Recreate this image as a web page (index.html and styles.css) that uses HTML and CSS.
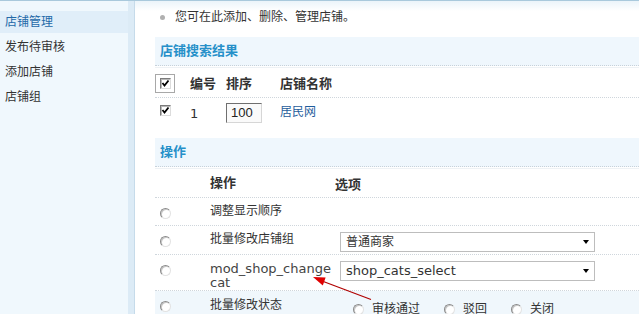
FILE: index.html
```html
<!DOCTYPE html>
<html lang="zh-CN">
<head>
<meta charset="utf-8">
<title>店铺管理</title>
<link rel="stylesheet" href="styles.css">
</head>
<body>
<div class="page">
  <aside class="side">
    <ul class="menu">
      <li class="on">店铺管理</li>
      <li>发布待审核</li>
      <li>添加店铺</li>
      <li>店铺组</li>
    </ul>
  </aside>
  <main class="main">
    <ul class="tips"><li>您可在此添加、删除、管理店铺。</li></ul>

    <div class="sec-title">店铺搜索结果</div>
    <div class="grid-row head first">
      <div class="c1"><span class="chk-wrap"><span class="chk"><svg viewBox="0 0 9 9" width="9" height="9"><path d="M1.5 4 L3.5 6.5 L7.5 1.5" fill="none" stroke="#000" stroke-width="1.8"/></svg></span></span></div>
      <div class="c2">编号</div>
      <div class="c3">排序</div>
      <div class="c4">店铺名称</div>
    </div>
    <div class="grid-row data">
      <div class="c1"><span class="chk solo"><svg viewBox="0 0 9 9" width="9" height="9"><path d="M1.5 4 L3.5 6.5 L7.5 1.5" fill="none" stroke="#000" stroke-width="1.8"/></svg></span></div>
      <div class="c2 lat">1</div>
      <div class="c3"><span class="num-input">100</span></div>
      <div class="c4"><a class="link">居民网</a></div>
    </div>

    <div class="sec-title second">操作</div>
    <div class="op-row head first">
      <div class="o1"></div>
      <div class="o2">操作</div>
      <div class="o3">选项</div>
    </div>
    <div class="op-row r1">
      <div class="o1"><span class="radio"></span></div>
      <div class="o2">调整显示顺序</div>
      <div class="o3"></div>
    </div>
    <div class="op-row r2">
      <div class="o1"><span class="radio"></span></div>
      <div class="o2">批量修改店铺组</div>
      <div class="o3"><div class="select"><span>普通商家</span><i class="caret"></i></div></div>
    </div>
    <div class="op-row r3">
      <div class="o1"><span class="radio"></span></div>
      <div class="o2 lat wrap">mod_shop_changecat</div>
      <div class="o3"><div class="select lat"><span>shop_cats_select</span><i class="caret"></i></div></div>
    </div>
    <div class="op-row r4">
      <div class="o1"><span class="radio"></span></div>
      <div class="o2">批量修改状态</div>
      <div class="o3 opts">
        <label class="opt"><span class="radio"></span>审核通过</label>
        <label class="opt"><span class="radio"></span>驳回</label>
        <label class="opt"><span class="radio"></span>关闭</label>
      </div>
    </div>
  </main>
  <svg class="arrow" width="639" height="314" viewBox="0 0 639 314">
    <line x1="371" y1="299.5" x2="322" y2="281" stroke="#b00000" stroke-width="1.2"/>
    <polygon points="313,277 325.6,277.6 322.8,285.4" fill="#e00000"/>
  </svg>
</div>
</body>
</html>
```
FILE: styles.css
```css
html, body {
  margin: 0;
  padding: 0;
  background: #fff;
}
body {
  font-family: "DejaVu Sans", "Noto Sans CJK SC", sans-serif;
  font-size: 12px;
  color: #333;
  width: 639px;
  height: 314px;
  overflow: hidden;
}
.page {
  position: relative;
  display: flex;
  border-top: 1px solid #a9c9dc;
  height: 313px;
}
.side {
  width: 128px;
  flex: none;
  background: #f0f8fd;
  border-right: 6px solid #dcebf6;
}
.menu {
  list-style: none;
  margin: 0;
  padding: 10px 0 0;
}
.menu li {
  height: 22px;
  line-height: 22px;
  margin-bottom: 3px;
  padding-left: 5px;
  color: #333;
}
.menu li.on {
  background: #e0eef9;
  color: #2369a8;
}
.main {
  flex: 1;
  border-left: 1px solid #c6dbea;
  padding-left: 20px;
  background: linear-gradient(#ebf4fa, #fff 10px) no-repeat;
}
.tips {
  list-style: none;
  margin: 7px 0 0;
  padding: 0;
}
.tips li {
  display: flex;
  align-items: center;
  height: 18px;
  line-height: 18px;
}
.tips li::before {
  content: "";
  width: 5px;
  height: 5px;
  border-radius: 50%;
  background: #b0b0b0;
  margin: 0 10px 0 5px;
}
.sec-title {
  margin-top: 11px;
  height: 28px;
  line-height: 28px;
  padding-left: 5px;
  background: #eff7fd;
  border-bottom: 1px dotted #c8d2da;
  font-size: 13px;
  font-weight: bold;
  color: #2690c9;
}
.sec-title.second {
  margin-top: 10px;
}
.grid-row, .op-row {
  display: flex;
  border-bottom: 1px dotted #cfd6dc;
}
.grid-row {
  align-items: center;
}
.head.first {
  margin-top: 1px;
  border-top: 1px solid #eef2f5;
}
.head {
  font-weight: bold;
  font-size: 13px;
}
.grid-row.head { height: 29px; }
.grid-row.data { height: 30px; border-bottom: none; }
.c1 { width: 35px; flex: none; display: flex; }
.c2 { width: 36px; flex: none; }
.c3 { width: 54px; flex: none; }
.c4 { flex: 1; }
.data .c4 { margin-top: -6px; }
.lat { font-size: 13px; }
.chk-wrap {
  display: inline-flex;
  border: 1px solid #a8a8a8;
  padding: 3px 3px 3px 4px;
  margin-top: 1px;
}
.chk {
  display: inline-flex;
  align-items: center;
  justify-content: center;
  width: 9px;
  height: 9px;
  background: #fff;
  border-top: 1px solid #7b7b7b;
  border-left: 1px solid #7b7b7b;
  border-right: 1px solid #dcdcdc;
  border-bottom: 1px solid #dcdcdc;
  box-shadow: inset 1px 1px 0 #b8b8b8;
}
.chk.solo {
  margin-left: 5px;
  margin-top: -5px;
}
.chk svg { display: block; }
.num-input {
  display: inline-block;
  box-sizing: border-box;
  width: 36px;
  height: 20px;
  line-height: 18px;
  padding-left: 4px;
  font-family: "Liberation Sans", sans-serif;
  font-size: 13px;
  color: #222;
  background: #fafafa;
  border-top: 1px solid #6f6f6f;
  border-left: 1px solid #6f6f6f;
  border-right: 1px solid #d6d6d6;
  border-bottom: 1px solid #d6d6d6;
}
.link {
  color: #1f5d9c;
  text-decoration: none;
}
.op-row {
  align-items: flex-start;
  box-sizing: border-box;
  padding-top: 6px;
}
.op-row.head {
  align-items: center;
  padding-top: 0;
  height: 30px;
}
.op-row.r1 { height: 28px; }
.op-row.r2 { height: 29px; }
.op-row.r3 { height: 36px; }
.op-row.r4 {
  height: 30px;
  border-bottom: none;
  background: #f0f7fc;
}
.o1 { width: 55px; flex: none; display: flex; }
.o2 { width: 125px; flex: none; line-height: 14px; }
.o3 { flex: 1; }
.r1 .o2 { margin-top: 0; }
.r2 .o2 { margin-top: 0; }
.r3 .o2 { margin-top: 1px; }
.r4 .o2 { margin-top: 1px; }
.wrap {
  box-sizing: border-box;
  padding-right: 4px;
  word-break: break-all;
  color: #444;
}
.radio {
  display: inline-block;
  flex: none;
  box-sizing: border-box;
  width: 11px;
  height: 11px;
  border-radius: 50%;
  background: #fff;
  border: 1px solid;
  border-color: #8a8a8a #e2e2e2 #e2e2e2 #8a8a8a;
  box-shadow: inset 1px 1px 0 #c8c8c8;
}
.o1 .radio {
  margin: 4px 0 0 5px;
}
.select {
  position: relative;
  box-sizing: border-box;
  width: 255px;
  height: 20px;
  margin-left: 5px;
  border: 1px solid #bdbdbd;
  background: #fff;
  line-height: 18px;
  padding-left: 5px;
  color: #333;
}
.caret {
  position: absolute;
  right: 5px;
  top: 7px;
  width: 0;
  height: 0;
  border-left: 3.5px solid transparent;
  border-right: 3.5px solid transparent;
  border-top: 4px solid #000;
}
.opts {
  display: flex;
  padding-left: 18px;
  margin-top: 5px;
}
.opt {
  display: inline-flex;
  align-items: center;
  margin-right: 24px;
  line-height: 14px;
}
.opt .radio {
  margin-right: 8px;
}
.arrow {
  position: absolute;
  left: 0;
  top: -1px;
  pointer-events: none;
}
```
